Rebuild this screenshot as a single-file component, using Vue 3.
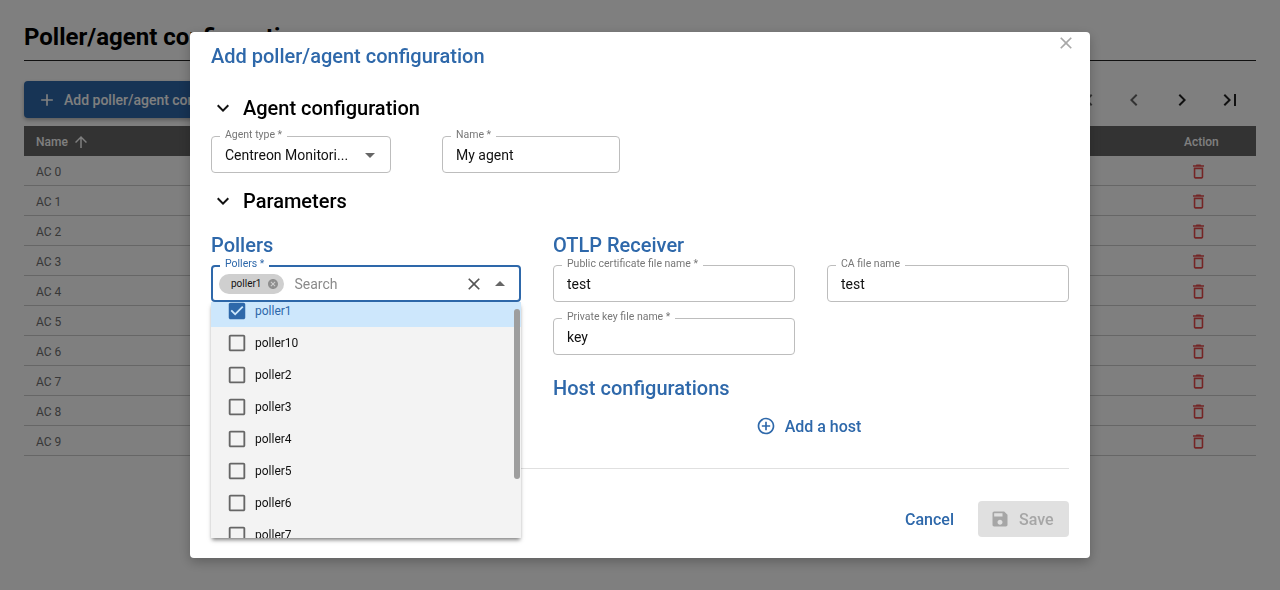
<script setup>
const icons = {
  expand: 'M16.59 8.59 12 13.17 7.41 8.59 6 10l6 6 6-6z',
  up: 'M4 12l1.41 1.41L11 7.83V20h2V7.83l5.58 5.59L20 12l-8-8-8 8z',
  add: 'M19 13h-6v6h-2v-6H5v-2h6V5h2v6h6v2z',
  close: 'M19 6.41 17.59 5 12 10.59 6.41 5 5 6.41 10.59 12 5 17.59 6.41 19 12 13.41 17.59 19 19 17.59 13.41 12z',
  trash: 'M6 19c0 1.1.9 2 2 2h8c1.1 0 2-.9 2-2V7H6v12zM8 9h8v10H8V9zm7.5-5l-1-1h-5l-1 1H5v2h14V4z',
  dropDown: 'M7 10l5 5 5-5z',
  dropUp: 'm7 14 5-5 5 5z',
  cancel: 'M12 2C6.47 2 2 6.47 2 12s4.47 10 10 10 10-4.47 10-10S17.53 2 12 2zm5 13.59L15.59 17 12 13.41 8.41 17 7 15.59 10.59 12 7 8.41 8.41 7 12 10.59 15.59 7 17 8.41 13.41 12 17 15.59z',
  blank: 'M19 5v14H5V5h14m0-2H5c-1.1 0-2 .9-2 2v14c0 1.1.9 2 2 2h14c1.1 0 2-.9 2-2V5c0-1.1-.9-2-2-2z',
  checked: 'M19 3H5c-1.11 0-2 .9-2 2v14c0 1.1.89 2 2 2h14c1.11 0 2-.9 2-2V5c0-1.1-.89-2-2-2zm-9 14l-5-5 1.41-1.41L10 14.17l7.59-7.59L19 8l-9 9z',
  addCircle: 'M13 7h-2v4H7v2h4v4h2v-4h4v-2h-4V7zm-1-5C6.48 2 2 6.48 2 12s4.48 10 10 10 10-4.48 10-10S17.52 2 12 2zm0 18c-4.41 0-8-3.59-8-8s3.59-8 8-8 8 3.59 8 8-3.59 8-8 8z',
  save: 'M17 3H5c-1.11 0-2 .9-2 2v14c0 1.1.89 2 2 2h14c1.1 0 2-.9 2-2V7l-4-4zm-5 16c-1.66 0-3-1.34-3-3s1.34-3 3-3 3 1.34 3 3-1.34 3-3 3zm3-10H5V5h10v4z',
  first: 'M18.41 16.59 13.82 12l4.59-4.59L17 6l-6 6 6 6zM6 6h2v12H6z',
  prev: 'M15.41 16.59 10.83 12l4.58-4.59L14 6l-6 6 6 6z',
  next: 'M8.59 16.59 13.17 12 8.59 7.41 10 6l6 6-6 6z',
  last: 'M5.59 7.41 10.18 12l-4.59 4.59L7 18l6-6-6-6zM16 6h2v12h-2z'
};

const rows = Array.from({ length: 10 }, (_, i) => `AC ${i}`);
const pagination = ['first', 'prev', 'next', 'last'];
const pollers = ['poller1', 'poller10', 'poller2', 'poller3', 'poller4', 'poller5', 'poller6', 'poller7', 'poller8'];
</script>

<template>
  <div class="page">
    <h1 class="page__title">Poller/agent configuration</h1>
    <div class="toolbar">
      <button class="toolbar__add">
        <svg class="icon-20" viewBox="0 0 24 24"><path :d="icons.add" /></svg>
        Add poller/agent configuration
      </button>
      <div class="toolbar__pages">
        <svg v-for="name in pagination" :key="name" class="page-icon" :class="{ 'page-icon--dim': name === 'first' || name === 'prev' }" viewBox="0 0 24 24"><path :d="icons[name]" /></svg>
      </div>
    </div>
    <div class="table">
      <div class="table__head">
        <span class="table__name">Name <svg class="table__sort" viewBox="0 0 24 24"><path :d="icons.up" /></svg></span>
        <span class="table__action">Action</span>
      </div>
      <div v-for="row in rows" :key="row" class="table__row">
        <span class="table__name">{{ row }}</span>
        <span class="table__action"><svg class="table__trash" viewBox="0 0 24 24"><path :d="icons.trash" /></svg></span>
      </div>
    </div>
  </div>

  <div class="overlay">
    <div class="modal">
      <svg class="modal__close" viewBox="0 0 24 24"><path :d="icons.close" /></svg>
      <h2 class="modal__title">Add poller/agent configuration</h2>

      <div class="section section--agent">
        <svg class="section__chevron" viewBox="0 0 24 24"><path :d="icons.expand" /></svg>
        <span>Agent configuration</span>
      </div>
      <div class="agent-row">
        <div class="field field--type">
          <span class="field__label">Agent type *</span>
          <span class="field__value">Centreon Monitori...</span>
          <svg class="field__arrow" viewBox="0 0 24 24"><path :d="icons.dropDown" /></svg>
        </div>
        <div class="field field--name">
          <span class="field__label">Name *</span>
          <span class="field__value">My agent</span>
        </div>
      </div>

      <div class="section section--params">
        <svg class="section__chevron" viewBox="0 0 24 24"><path :d="icons.expand" /></svg>
        <span>Parameters</span>
      </div>

      <div class="params">
        <div class="params__left">
          <h3 class="heading">Pollers</h3>
          <div class="field field--focus">
            <span class="field__label">Pollers *</span>
            <span class="chip">poller1<svg class="chip__x" viewBox="0 0 24 24"><path :d="icons.cancel" /></svg></span>
            <span class="field__search">Search</span>
            <svg class="field__clear" viewBox="0 0 24 24"><path :d="icons.close" /></svg>
            <svg class="field__arrow" viewBox="0 0 24 24"><path :d="icons.dropUp" /></svg>
            <div class="dropdown">
              <ul class="dropdown__list">
                <li v-for="(p, i) in pollers" :key="p" class="dropdown__item" :class="{ 'dropdown__item--on': i === 0 }">
                  <svg class="dropdown__box" viewBox="0 0 24 24"><path :d="i === 0 ? icons.checked : icons.blank" /></svg>
                  {{ p }}
                </li>
              </ul>
              <div class="dropdown__thumb"></div>
            </div>
          </div>
        </div>

        <div class="params__right">
          <h3 class="heading">OTLP Receiver</h3>
          <div class="otlp">
            <div class="field">
              <span class="field__label">Public certificate file name *</span>
              <span class="field__value">test</span>
            </div>
            <div class="field">
              <span class="field__label">CA file name</span>
              <span class="field__value">test</span>
            </div>
            <div class="field">
              <span class="field__label">Private key file name *</span>
              <span class="field__value">key</span>
            </div>
          </div>
          <h3 class="heading heading--host">Host configurations</h3>
          <div class="add-host">
            <svg class="add-host__icon" viewBox="0 0 24 24"><path :d="icons.addCircle" /></svg>
            Add a host
          </div>
        </div>
      </div>

      <div class="divider"></div>
      <div class="actions">
        <span class="actions__cancel">Cancel</span>
        <span class="actions__save">
          <svg class="icon-20" viewBox="0 0 24 24"><path :d="icons.save" /></svg>
          Save
        </span>
      </div>
    </div>
  </div>
</template>

<style scoped>
svg {
  display: block;
  fill: currentColor;
  flex: none;
}

.icon-20 {
  width: 20px;
  height: 20px;
}

.page {
  padding: 23px 24px 0;
  height: 590px;
  box-sizing: border-box;
  background: #fff;
}

.page__title {
  margin: 0;
  height: 37px;
  line-height: 28px;
  font-size: 24px;
  font-weight: 700;
  color: #000;
  border-bottom: 1px solid #222;
}

.toolbar {
  display: flex;
  justify-content: space-between;
  align-items: center;
  margin-top: 20px;
  height: 37px;
}

.toolbar__add {
  display: flex;
  align-items: center;
  gap: 7px;
  height: 37px;
  width: 300px;
  padding: 0 0 0 13px;
  border: 0;
  border-radius: 4px;
  background: #2e68aa;
  color: #fff;
  font: 500 14px Roboto, sans-serif;
  box-shadow: 0 2px 4px rgba(0, 0, 0, .3);
}

.toolbar__pages {
  display: flex;
  padding-right: 2px;
}

.page-icon {
  width: 24px;
  height: 24px;
  padding: 0 12px;
  color: #222;
}

.page-icon--dim {
  color: #666;
}

.table {
  margin-top: 8px;
  font-size: 12px;
}

.table__head,
.table__row {
  display: flex;
  justify-content: space-between;
  align-items: center;
  height: 30px;
  box-sizing: border-box;
}

.table__head {
  padding-top: 1px;
  background: #666;
  color: #fff;
  font-weight: 500;
}

.table__row {
  padding-top: 2px;
  color: #707070;
  border-bottom: 1px solid #ccc;
}

.table__name {
  display: flex;
  align-items: center;
  gap: 4px;
  padding-left: 12px;
}

.table__sort {
  width: 18px;
  height: 18px;
}

.table__action {
  width: 72px;
}

.table__trash {
  width: 19px;
  height: 19px;
  margin: -1px 0 0 5px;
  color: #e84a4a;
}

.overlay {
  position: fixed;
  inset: 0;
  display: flex;
  align-items: center;
  justify-content: center;
  background: rgba(0, 0, 0, .5);
}

.modal {
  position: relative;
  width: 900px;
  height: 526px;
  box-sizing: border-box;
  padding: 12px 21px 21px;
  background: #fff;
  border-radius: 4px;
  box-shadow: 0 4px 12px rgba(0, 0, 0, .25);
}

.modal__close {
  position: absolute;
  top: 1px;
  right: 14px;
  width: 20px;
  height: 20px;
  color: #a8a8a8;
}

.modal__title {
  margin: 0;
  height: 24px;
  line-height: 24px;
  font-size: 20px;
  font-weight: 500;
  color: #2e68aa;
}

.section {
  display: flex;
  align-items: center;
  gap: 8px;
  height: 24px;
  font-size: 20px;
  font-weight: 500;
  color: #000;
}

.section--agent {
  margin-top: 28px;
}

.section--params {
  margin-top: 16px;
}

.section__chevron {
  width: 24px;
  height: 24px;
  color: #111;
}

.agent-row {
  display: flex;
  gap: 51px;
  margin-top: 16px;
}

.field {
  position: relative;
  display: flex;
  align-items: center;
  height: 37px;
  box-sizing: border-box;
  padding: 0 13px;
  border: 1px solid #bdbdbd;
  border-radius: 4px;
  font-size: 14px;
  color: #111;
}

.field--type {
  width: 180px;
}

.field--name {
  width: 178px;
}

.field--focus {
  border: 2px solid #2e68aa;
  padding: 0 6px;
}

.field__label {
  position: absolute;
  top: -8px;
  left: 8px;
  padding: 0 5px;
  background: #fff;
  font-size: 10.5px;
  line-height: 11px;
  color: #777;
}

.field--focus .field__label {
  top: -9px;
  left: 7px;
  color: #2e68aa;
}

.field__value {
  flex: 1;
  white-space: nowrap;
}

.field__arrow {
  width: 24px;
  height: 24px;
  color: #666;
  margin-right: -5px;
}

.field--focus .field__arrow {
  margin-right: 1px;
}

.chip {
  display: flex;
  align-items: center;
  gap: 5px;
  height: 20px;
  padding: 0 5px 0 12px;
  border-radius: 10px;
  background: #cfcfcf;
  font-size: 10px;
  color: #111;
}

.chip__x {
  width: 12px;
  height: 12px;
  color: #8e8e8e;
}

.field__search {
  flex: 1;
  margin-left: 11px;
  color: #8a8a8a;
}

.field__clear {
  width: 20px;
  height: 20px;
  margin-right: 4px;
  color: #555;
}

.dropdown {
  position: absolute;
  top: 35px;
  left: -2px;
  width: 310px;
  height: 236px;
  overflow: hidden;
  background: #f3f3f3;
  box-shadow: 0 3px 4px -1px rgba(0, 0, 0, .5);
  z-index: 2;
}

.dropdown__list {
  margin: -7px 0 0;
  padding: 0;
  list-style: none;
}

.dropdown__item {
  display: flex;
  align-items: center;
  gap: 7px;
  height: 32px;
  padding-left: 15px;
  font-size: 12px;
  color: #111;
}

.dropdown__item--on {
  background: #cde7fc;
  color: #2e68aa;
}

.dropdown__box {
  width: 22px;
  height: 22px;
  color: #666;
}

.dropdown__item--on .dropdown__box {
  color: #2e68aa;
}

.dropdown__thumb {
  position: absolute;
  top: 7px;
  right: 1px;
  width: 6px;
  height: 170px;
  border-radius: 3px;
  background: #9e9e9e;
}

.params {
  display: flex;
  gap: 32px;
  margin-top: 20px;
}

.params__left {
  width: 310px;
}

.params__right {
  flex: 1;
}

.heading {
  margin: 0 0 8px;
  height: 24px;
  line-height: 24px;
  font-size: 20px;
  font-weight: 500;
  color: #2e68aa;
}

.heading--host {
  margin: 21px 0 0;
}

.otlp {
  display: grid;
  grid-template-columns: 242px 242px;
  column-gap: 32px;
  row-gap: 16px;
}

.add-host {
  display: flex;
  align-items: center;
  justify-content: center;
  gap: 9px;
  height: 24px;
  margin-top: 14px;
  padding-right: 5px;
  font-size: 16px;
  font-weight: 500;
  color: #2e68aa;
}

.add-host__icon {
  width: 20px;
  height: 20px;
}

.divider {
  margin-top: 30px;
  height: 1px;
  background: #e0e0e0;
}

.actions {
  display: flex;
  justify-content: flex-end;
  align-items: center;
  gap: 24px;
  margin-top: 32px;
  font-size: 16px;
  font-weight: 500;
}

.actions__cancel {
  color: #2e68aa;
}

.actions__save {
  display: flex;
  align-items: center;
  gap: 9px;
  width: 91px;
  height: 36px;
  box-sizing: border-box;
  padding-left: 12px;
  border-radius: 4px;
  background: #e0e0e0;
  color: #a6a6a6;
}
</style>

<style>
body {
  overflow: hidden;
  font-family: Roboto, sans-serif;
}
</style>
